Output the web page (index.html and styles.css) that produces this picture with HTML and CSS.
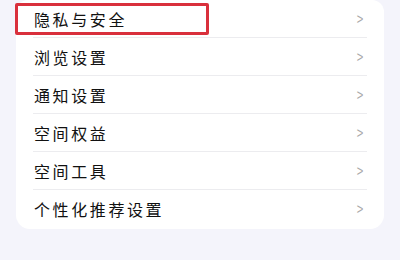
FILE: index.html
```html
<!DOCTYPE html>
<html lang="zh">
<head>
<meta charset="utf-8">
<link rel="stylesheet" href="styles.css">
</head>
<body>
<div class="card">
  <div class="row first"><span class="label">隐私与安全</span><span class="chev">&gt;</span><div class="highlight"></div></div>
  <div class="row"><span class="label">浏览设置</span><span class="chev">&gt;</span></div>
  <div class="row"><span class="label">通知设置</span><span class="chev">&gt;</span></div>
  <div class="row"><span class="label">空间权益</span><span class="chev">&gt;</span></div>
  <div class="row"><span class="label">空间工具</span><span class="chev">&gt;</span></div>
  <div class="row last"><span class="label">个性化推荐设置</span><span class="chev">&gt;</span></div>
</div>
</body>
</html>
```

FILE: styles.css
```css
html, body {
  margin: 0;
  padding: 0;
  width: 400px;
  height: 260px;
  background: #f4f4fb;
  overflow: hidden;
  font-family: "Noto Sans CJK SC", "Noto Sans", sans-serif;
}
.card {
  margin: 0 16px;
  width: 368px;
  height: 229px;
  background: #ffffff;
  border-radius: 12px 12px 14px 14px;
  padding: 0 17px;
  box-sizing: border-box;
  display: flex;
  flex-direction: column;
}
.row {
  position: relative;
  height: 38px;
  display: flex;
  align-items: center;
  justify-content: space-between;
  border-bottom: 1px solid #ececef;
  box-sizing: border-box;
}
.row.last {
  border-bottom: none;
}
.label {
  font-size: 16px;
  font-weight: 400;
  color: #111111;
  letter-spacing: 2.6px;
  padding-left: 1px;
}
.chev {
  font-family: "Liberation Sans", sans-serif;
  font-size: 14px;
  color: #a8a8a8;
  margin-right: 3px;
  transform: scaleX(0.8);
}
.highlight {
  position: absolute;
  left: -18px;
  top: 3px;
  width: 194px;
  height: 32px;
  border: 3px solid #d9303c;
  border-radius: 2px;
  box-sizing: border-box;
}
```
